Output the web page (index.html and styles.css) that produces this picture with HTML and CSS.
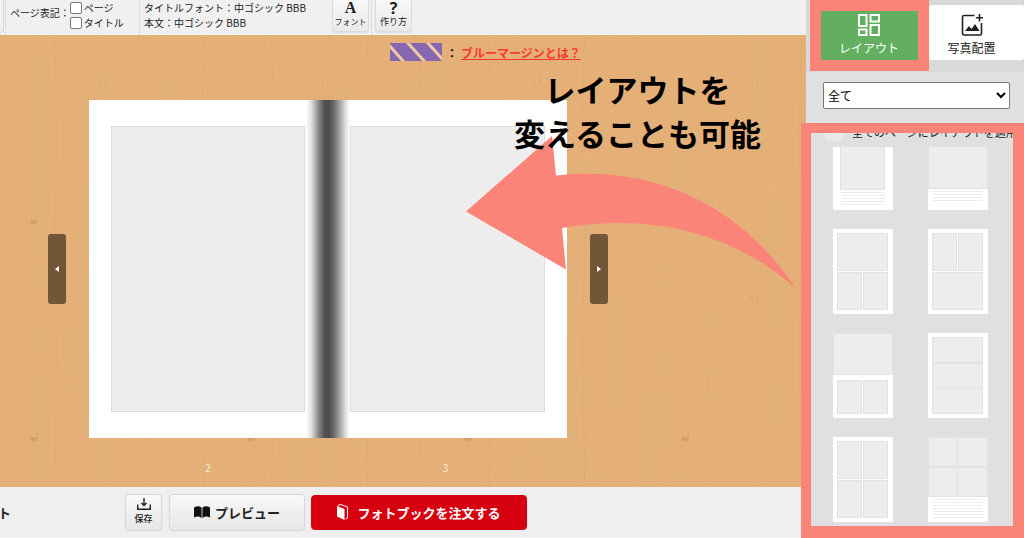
FILE: index.html
```html
<!DOCTYPE html>
<html lang="ja">
<head>
<meta charset="utf-8">
<meta name="viewport" content="width=device-width, initial-scale=1">
<title>フォトブック編集</title>
<link rel="stylesheet" href="styles.css">
</head>
<body>
<div class="app">
  <div class="workspace">
    <header class="toolbar">
      <div class="tool-edge"></div>
      <fieldset class="page-options">
        <span class="option-title">ページ表記：</span>
        <span class="option-list">
          <label class="option"><input type="checkbox">ページ</label>
          <label class="option"><input type="checkbox">タイトル</label>
        </span>
      </fieldset>
      <div class="font-info">
        <span>タイトルフォント：中ゴシック BBB</span>
        <span>本文：中ゴシック BBB</span>
      </div>
      <div class="tool-group"><button class="tool" type="button"><span class="tool-glyph serif">A</span>フォント</button></div>
      <div class="tool-group"><button class="tool howto" type="button"><span class="tool-glyph">?</span>作り方</button></div>
    </header>

    <main class="stage">
      <svg class="wood" aria-hidden="true">
        <defs>
          <filter id="grain" x="0" y="0" width="100%" height="100%">
            <feTurbulence type="fractalNoise" baseFrequency="0.09 0.004" numOctaves="3" seed="4"/>
            <feColorMatrix values="0 0 0 0 0.7  0 0 0 0 0.45  0 0 0 0 0.22  0.8 0 0 0 -0.3"/>
          </filter>
          <pattern id="knots" width="217" height="217" patternUnits="userSpaceOnUse">
            <g fill="none" stroke="#bd8448" stroke-width="1" opacity=".3">
              <path d="M30 182q2 4 4 5M38 181q-1 4-3 6M99 44q2 4 3 6M106 43q0 4-1 7"/>
              <path d="M54 0q4 60 1 217M151 0q-5 90 0 217M204 0q-3 110 0 217" opacity=".4"/>
            </g>
            <ellipse cx="34" cy="187" rx="4" ry="2" fill="#b9783f" opacity=".3"/>
          </pattern>
        </defs>
        <rect width="100%" height="100%" fill="#e5b077"/>
        <rect width="100%" height="100%" filter="url(#grain)"/>
        <rect width="100%" height="100%" fill="url(#knots)"/>
      </svg>

      <div class="margin-note">
        <svg class="swatch" viewBox="0 0 52 18" aria-hidden="true"><path fill="#8667b0" d="M0 0h52v18H0z"/><path stroke="#f0c9a5" stroke-width="3" d="M-3 0L14 19M17-1L35 19M37-1L55 19"/></svg>
        <span class="colon">：</span>
        <a href="#margin">ブルーマージンとは？</a>
      </div>

      <div class="spread">
        <button class="turn" type="button" aria-label="前のページ"><svg viewBox="0 0 4 6"><path d="M4 0v6L0 3z"/></svg></button>
        <div class="book">
          <div class="photo-slot"></div>
          <div class="photo-slot"></div>
        </div>
        <button class="turn" type="button" aria-label="次のページ"><svg viewBox="0 0 4 6"><path d="M0 0v6l4-3z"/></svg></button>
      </div>
      <div class="page-numbers"><span>2</span><span>3</span></div>
    </main>

    <footer class="actions">
      <span class="clipped-label">ト</span>
      <button class="action save" type="button">
        <svg viewBox="0 0 14 12" aria-hidden="true"><path fill="none" stroke="#222" stroke-width="1.4" d="M7 0v7M4.500 5L7 7.500 9.500 5M.7 6.500v4.700h12.600V6.500"/></svg>
        保存
      </button>
      <button class="action preview" type="button">
        <svg viewBox="0 0 16 12" aria-hidden="true"><path fill="#111" d="M0 1.500Q4-1 7.600 1.500V12Q4 9.500 0 11.500zM16 1.500Q12-1 8.400 1.500V12Q12 9.500 16 11.500z"/></svg>
        プレビュー
      </button>
      <button class="action order" type="button">
        <svg viewBox="0 0 12 16" aria-hidden="true"><path fill="#fff" d="M0 2l7.500 3v11L0 12.500z"/><path fill="none" stroke="#fff" d="M1 1.500L3.500.5l7 2.500v11L8.500 15"/></svg>
        フォトブックを注文する
      </button>
    </footer>
  </div>

  <aside class="sidebar">
    <nav class="tabs">
      <button class="tab active" type="button">
        <svg viewBox="0 0 22 22" aria-hidden="true"><path fill="none" stroke="#fff" stroke-width="2" d="M1 1h7.500v11H1zM12.500 1H21v6.500h-8.500zM1 15.500h7.500V21H1zM12.500 11H21v10h-8.500z"/></svg>
        レイアウト
      </button>
      <button class="tab" type="button">
        <svg viewBox="0 0 22 22" aria-hidden="true"><path fill="none" stroke="#222" stroke-width="1.600" d="M13.500 1.500H3Q1.500 1.500 1.500 3v16.500Q1.500 21 3 21h16q1.500 0 1.500-1.500V9M18.500 0v7.500M14.800 3.700h7.200"/><path fill="#222" d="M4 17l4-5 2.500 3 3.500-5 4.500 7z"/></svg>
        写真配置
      </button>
    </nav>
    <div class="filter">
      <select aria-label="レイアウトの種類"><option>全て</option></select>
    </div>
    <section class="layouts">
      <label class="apply-all"><input type="checkbox"><span>全てのページにレイアウトを適用</span></label>
      <div class="thumb-window">
        <div class="thumbs">
          <button class="thumb" type="button" aria-label="写真1枚と文章"><svg viewBox="0 0 60 85"><path class="paper" d="M0 0h60v85H0z"/><path class="cell" d="M7.500 10.500h44v54h-44z"/><path class="rule" d="M8 67.500h44m-44 3h44m-44 3h44m-44 3h44m-44 3h44"/></svg></button>
          <button class="thumb" type="button" aria-label="大きな写真1枚と文章"><svg viewBox="0 0 60 85"><path class="paper" d="M0 0h60v85H0z"/><path class="cell" d="M.5.5h59v63H.5z"/><path class="rule" d="M5 66.500h49m-49 3h49m-49 3h49m-49 3h49"/></svg></button>
          <button class="thumb" type="button" aria-label="上1枚、下2枚"><svg viewBox="0 0 60 85"><path class="paper" d="M0 0h60v85H0z"/><path class="cell" d="M4.500 4.500h50v37h-50zM4.500 43.500h24v37h-24zM30.500 43.500h24v37h-24z"/></svg></button>
          <button class="thumb" type="button" aria-label="上2枚、下1枚"><svg viewBox="0 0 60 85"><path class="paper" d="M0 0h60v85H0z"/><path class="cell" d="M4.500 4.500h24v37h-24zM30.500 4.500h24v37h-24zM4.500 43.500h50v37h-50z"/></svg></button>
          <button class="thumb" type="button" aria-label="大きな写真1枚、下2枚"><svg viewBox="0 0 60 85"><path class="paper" d="M0 0h60v85H0z"/><path class="cell" d="M.5.5h59v41H.5zM4.500 47.500h24v33h-24zM30.500 47.500h24v33h-24z"/></svg></button>
          <button class="thumb" type="button" aria-label="横長3枚"><svg viewBox="0 0 60 85"><path class="paper" d="M0 0h60v85H0z"/><path class="cell" d="M4.500 4.500h50v25h-50zM4.500 30.500h50v25h-50zM4.500 55.500h50v25h-50z"/></svg></button>
          <button class="thumb" type="button" aria-label="写真4枚"><svg viewBox="0 0 60 85"><path class="paper" d="M0 0h60v85H0z"/><path class="cell" d="M4.500 4.500h24v37h-24zM30.500 4.500h24v37h-24zM4.500 43.500h24v37h-24zM30.500 43.500h24v37h-24z"/></svg></button>
          <button class="thumb" type="button" aria-label="写真4枚と文章"><svg viewBox="0 0 60 85"><path class="paper" d="M0 0h60v85H0z"/><path class="cell" d="M.5.5h28.500v29H.5zM30 .5h29.500v29H30zM.5 30.500h28.500v29H.5zM30 30.500h29.500v29H30z"/><path class="rule" d="M5 62.500h50m-50 3h50m-50 3h50m-50 3h50m-50 3h50m-50 3h50m-50 3h50"/></svg></button>
        </div>
      </div>
    </section>
  </aside>

  <svg class="arrow" viewBox="466 136 330 154" aria-hidden="true"><path fill="#fb8479" d="M466 211.500L552 136 556 175.500C655 165 740 205 795.500 288C735 235 655 212 562 228L566 269.500z"/></svg>
  <p class="callout">レイアウトを<br>変えることも可能</p>
</div>
</body>
</html>
```
FILE: styles.css
```css
* { box-sizing: border-box; }

body {
  margin: 0;
  font-family: "Noto Sans CJK JP", sans-serif;
  font-size: 10px;
  color: #222;
}

button, select, input { font: inherit; color: inherit; margin: 0; }
button { padding: 0; border: 0; cursor: pointer; }
svg { display: block; }

.app {
  position: relative;
  display: grid;
  grid-template-columns: minmax(0, 1fr) 218px;
  min-height: 100vh;
}

.workspace { display: flex; flex-direction: column; min-width: 0; }

/* Toolbar */
.toolbar {
  display: flex;
  height: 35px;
  background: #f0f0f0;
  overflow: hidden;
  white-space: nowrap;
}
.tool-edge {
  width: 6px;
  border-right: 1px dotted #ccc;
}
.tool-edge::before {
  content: "";
  display: block;
  width: 3px;
  height: 32px;
  border: 1px solid #d8d8d8;
  border-width: 0 1px 1px 0;
  border-radius: 0 0 4px 0;
}
.page-options {
  display: flex;
  width: 134px;
  margin: 0;
  padding: 0 0 0 4px;
  border: 0;
  border-right: 1px dotted #ccc;
}
.option-title { line-height: 26px; }
.option-list { display: flex; flex-direction: column; }
.option {
  display: flex;
  align-items: center;
  gap: 2px;
  height: 15px;
}
.option input {
  appearance: none;
  width: 12px;
  height: 12px;
  border: 1px solid #767676;
  border-radius: 2px;
  background: #fff;
}
.font-info {
  display: flex;
  flex-direction: column;
  width: 192px;
  padding-left: 4px;
  line-height: 15px;
}
.tool-group + .tool-group {
  margin-left: 2px;
  padding-left: 3px;
  border-left: 1px dotted #ccc;
}
.tool {
  display: flex;
  flex-direction: column;
  align-items: center;
  justify-content: flex-end;
  width: 37px;
  height: 32px;
  padding-bottom: 3px;
  border: 1px solid #dcdcdc;
  border-top: 0;
  border-radius: 0 0 4px 4px;
  background: linear-gradient(#f8f8f8, #e9e9e9);
  box-shadow: 0 1px 1px #ddd;
  font-size: 8px;
  line-height: 12px;
}
.howto { font-size: 9px; }
.tool-glyph { font: bold 16px/16px "Open Sans", sans-serif; }
.serif { font-family: "Liberation Serif", serif; }

/* Editing stage */
.stage {
  position: relative;
  flex: 1;
  display: flex;
  flex-direction: column;
  overflow: hidden;
}
.wood { position: absolute; inset: 0; width: 100%; height: 100%; }
.margin-note, .spread, .page-numbers { position: relative; }
.margin-note {
  display: flex;
  align-items: center;
  height: 18px;
  margin: 8px 0 39px 390px;
  font-size: 12px;
  font-weight: bold;
  white-space: nowrap;
}
.swatch { width: 52px; height: 18px; }
.colon { width: 19px; padding-left: 4px; }
.margin-note a { color: #f83a31; }
.spread {
  display: flex;
  align-items: center;
  gap: 23px;
  width: calc(75% - 45px);
  margin-left: 48px;
}
.turn {
  display: grid;
  place-items: center;
  flex: none;
  width: 18px;
  height: 70px;
  border-radius: 3px;
  background: #715738;
}
.turn svg { width: 4px; height: 6px; fill: #fff; }
.book {
  position: relative;
  flex: 1;
  display: grid;
  grid-template-columns: 1fr 1fr;
  gap: 45px;
  padding: 26px 22px;
  aspect-ratio: 476 / 337;
  background: #fff;
}
.book::after {
  content: "";
  position: absolute;
  inset: 0 calc(50% - 22px);
  background: linear-gradient(90deg, #fff0, #e0e0e0 12%, #8b8b8b 28%, #525252 42%, #4c4c4c 52%, #666 62%, #a5a5a5 77%, #e3e3e3 91%, #fff0);
}
.photo-slot { border: 1px solid #dcdcdc; background: #ededed; }
.page-numbers {
  display: grid;
  grid-template-columns: 1fr 1fr;
  width: 59%;
  margin: 22px 0 0 89px;
  color: #fbe9d4;
  line-height: 16px;
  text-align: center;
}

/* Bottom actions */
.actions {
  display: flex;
  align-items: center;
  height: 51px;
  background: #efefef;
  border-bottom: 1px solid #fafafa;
  font-size: 13px;
  font-weight: bold;
  white-space: nowrap;
}
.clipped-label { width: 125px; text-indent: -2px; }
.action {
  display: flex;
  align-items: center;
  justify-content: center;
  height: 37px;
  border: 1px solid #d8d8d8;
  border-radius: 4px;
  background: linear-gradient(#f8f8f8, #e7e7e7);
  box-shadow: 0 0 1px #ccc;
}
.save {
  flex-direction: column;
  gap: 2px;
  width: 37px;
  font-size: 9px;
  font-weight: 500;
  line-height: 14px;
}
.save svg { width: 14px; height: 12px; }
.preview { gap: 5px; width: 136px; margin: 0 6px 0 7px; }
.preview svg { width: 16px; height: 12px; }
.order {
  gap: 8px;
  width: 216px;
  height: 35px;
  border-color: #d7000f;
  background: #d7000f;
  color: #fff;
}
.order svg { width: 12px; height: 16px; }

/* Sidebar */
.sidebar {
  display: flex;
  flex-direction: column;
  min-width: 0;
  background: #e0e0e0;
}
.tabs {
  display: grid;
  grid-template-columns: 118px 1fr;
  height: 72px;
  padding: 5px 0 12px 5px;
  background: #d9d9d9;
}
.tab {
  position: relative;
  display: flex;
  flex-direction: column;
  align-items: center;
  gap: 2px;
  padding: 9px 10px 0 0;
  border-radius: 3px;
  background: #fff;
  font-size: 12px;
  line-height: 20px;
}
.tab svg { width: 22px; height: 22px; }
.active { padding-right: 2px; background: #62af60; color: #fff; }
.active::after {
  content: "";
  position: absolute;
  inset: -5px 0 -11px -1px;
  border: 11px solid #fb8479;
}
.filter { padding: 10px 14px 14px 17px; }
.filter select {
  display: block;
  width: 100%;
  height: 27px;
  padding: 0;
  border: 1px solid #767676;
  border-radius: 2px;
  background-color: #fff;
  color: #000;
  font-size: 12px;
}

/* Highlighted list of layouts */
.layouts {
  position: relative;
  flex: 1;
  margin-left: -5px;
  border: solid #fb8479;
  border-width: 10px 11px 12px 10px;
  background: #e0e0e0;
  overflow: hidden;
}
.apply-all {
  display: flex;
  align-items: center;
  gap: 9px;
  height: 18px;
  margin: -10px 0 6px 14px;
  font-size: 11px;
  line-height: 16px;
  white-space: nowrap;
}
.apply-all input {
  appearance: none;
  flex: none;
  width: 18px;
  height: 18px;
  border-radius: 3px;
  background: #e9e9e9;
}
.thumb-window { overflow: hidden; padding-bottom: 4px; }
.thumbs {
  display: grid;
  grid-template-columns: 60px 60px;
  gap: 19px 35px;
  margin: -22px 0 0 22px;
}
.thumb { height: 85px; background: none; }
.thumb svg { width: 60px; height: 85px; }
.paper { fill: #fff; }
.cell { fill: #ededed; stroke: #e1e1e1; }
.rule { fill: none; stroke: #ececec; }

/* Instruction laid over the editor */
.arrow {
  position: absolute;
  left: 466px;
  top: 136px;
  width: 330px;
  height: 154px;
}
.callout {
  position: absolute;
  left: 514px;
  top: 67px;
  margin: 0;
  color: #000;
  font-size: 31px;
  font-weight: bold;
  line-height: 44px;
  text-align: center;
  white-space: nowrap;
}
```
